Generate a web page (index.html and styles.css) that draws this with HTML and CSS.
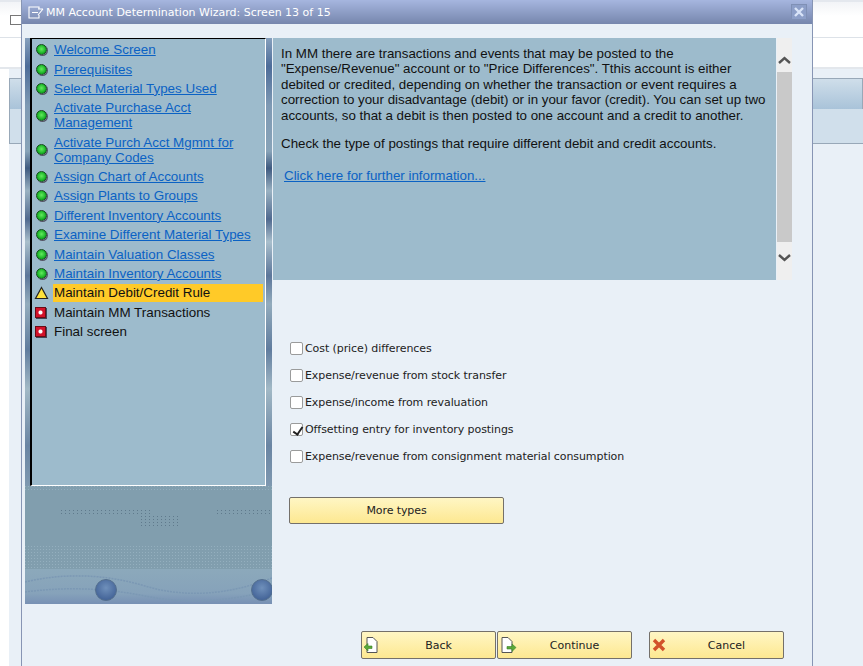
FILE: index.html
```html
<!DOCTYPE html>
<html>
<head>
	<meta charset="utf-8"/>
	<title>MM Account Determination Wizard</title>
	<link rel="stylesheet" href="styles.css">
</head>
<body>
	<!-- SAP window behind the dialog -->
	<div class="shell">
		<div class="shell-bar"><span class="shell-icon"></span></div>
		<div class="shell-bar2"></div>
		<div class="shell-content">
			<div class="shell-head"></div>
			<div class="shell-sub"></div>
		</div>
	</div>

	<div class="dialog">
		<div class="title">
			<svg class="title-icon" width="16" height="13" viewBox="0 0 16 13">
				<path d="M11 3V1H1v11h10V9M4 6.500h6M10 9l5-6M10 3h5" fill="none" stroke="#fff" stroke-width="1.100"/>
			</svg>
			<span class="title-text">MM Account Determination Wizard: Screen 13 of 15</span>
			<span class="close">
				<svg width="10" height="10" viewBox="0 0 10 10"><path d="M1 1l8 8M9 1l-8 8" stroke="#d9e4f8" stroke-width="2.400"/></svg>
			</span>
		</div>

		<div class="main">
			<div class="nav">
				<ul class="steps">
					<li><i class="dot"></i><a href="#">Welcome Screen</a></li>
					<li><i class="dot"></i><a href="#">Prerequisites</a></li>
					<li><i class="dot"></i><a href="#">Select Material Types Used</a></li>
					<li><i class="dot"></i><a href="#">Activate Purchase Acct<br>Management</a></li>
					<li><i class="dot"></i><a href="#">Activate Purch Acct Mgmnt for<br>Company Codes</a></li>
					<li><i class="dot"></i><a href="#">Assign Chart of Accounts</a></li>
					<li><i class="dot"></i><a href="#">Assign Plants to Groups</a></li>
					<li><i class="dot"></i><a href="#">Different Inventory Accounts</a></li>
					<li><i class="dot"></i><a href="#">Examine Different Material Types</a></li>
					<li><i class="dot"></i><a href="#">Maintain Valuation Classes</a></li>
					<li><i class="dot"></i><a href="#">Maintain Inventory Accounts</a></li>
					<li class="current">
						<svg class="tri" width="15" height="14" viewBox="0 0 15 14">
							<path d="M7.500 1.500L13.500 12.500H1.500Z" fill="#ffe23c" stroke="#222" stroke-width="1.200"/>
						</svg>
						<span>Maintain Debit/Credit Rule</span>
					</li>
					<li><i class="stop"></i><span>Maintain MM Transactions</span></li>
					<li><i class="stop"></i><span>Final screen</span></li>
				</ul>
				<svg class="art" width="247" height="118" viewBox="0 0 247 118">
					<defs>
						<pattern id="dots" width="3" height="3" patternUnits="userSpaceOnUse">
							<rect width="1" height="1" fill="#94afbe"/>
						</pattern>
						<pattern id="dark" width="4" height="3" patternUnits="userSpaceOnUse">
							<rect width="1" height="1" fill="#5f7a8c"/>
						</pattern>
						<linearGradient id="floor" x1="0" y1="0" x2="0" y2="1">
							<stop offset="0" stop-color="#8ca9bb"/>
							<stop offset="0.7" stop-color="#86a2ba"/>
							<stop offset="1" stop-color="#7790b4"/>
						</linearGradient>
						<radialGradient id="bubble" cx="0.5" cy="0.4" r="0.7">
							<stop offset="0" stop-color="#6f90bb"/>
							<stop offset="1" stop-color="#3a5a90"/>
						</radialGradient>
					</defs>
					<rect width="247" height="118" fill="#819eae"/>
					<rect width="247" height="6" fill="url(#dots)"/>
					<rect x="33" y="24" width="92" height="5" fill="url(#dark)"/>
					<rect x="114" y="29" width="42" height="12" fill="url(#dark)"/>
					<rect x="189" y="24" width="58" height="5" fill="url(#dark)"/>
					<rect y="59" width="247" height="24" fill="url(#dots)"/>
					<rect y="83" width="247" height="35" fill="url(#floor)"/>
					<path d="M0 96q60-14 120 4t127-8M0 106q60-8 120 4t127-6" fill="none" stroke="#7b98b4" stroke-width="1.500" stroke-dasharray="2 1"/>
					<circle cx="81" cy="104" r="10.500" fill="url(#bubble)" stroke="#55708f"/>
					<circle cx="237" cy="104" r="10.500" fill="url(#bubble)" stroke="#55708f"/>
				</svg>
			</div>

			<div class="content">
				<div class="info">
					<div class="info-text">
						<p>In MM there are transactions and events that may be posted to the<br>
						"Expense/Revenue" account or to "Price Differences". Tthis account is either<br>
						debited or credited, depending on whether the transaction or event requires a<br>
						correction to your disadvantage (debit) or in your favor (credit). You can set up two<br>
						accounts, so that a debit is then posted to one account and a credit to another.</p>
						<p>Check the type of postings that require different debit and credit accounts.</p>
						<p class="more"><a href="#">Click here for further information...</a></p>
					</div>
					<div class="scroll">
						<svg width="15" height="34" viewBox="0 0 15 34"><path d="M2 25l5.500-5 5.500 5" fill="none" stroke="#555" stroke-width="2.400"/></svg>
						<div class="thumb"></div>
						<svg width="15" height="38" viewBox="0 0 15 38"><path d="M2 13l5.500 5 5.500-5" fill="none" stroke="#555" stroke-width="2.400"/></svg>
					</div>
				</div>

				<div class="options">
					<label class="opt"><input type="checkbox">Cost (price) differences</label>
					<label class="opt"><input type="checkbox">Expense/revenue from stock transfer</label>
					<label class="opt"><input type="checkbox">Expense/income from revaluation</label>
					<label class="opt"><input type="checkbox" checked>Offsetting entry for inventory postings</label>
					<label class="opt"><input type="checkbox">Expense/revenue from consignment material consumption</label>
				</div>

				<button class="btn more-btn">More types</button>
			</div>
		</div>

		<div class="footer">
			<button class="btn foot-btn">
				<svg class="btn-icon" width="16" height="18" viewBox="0 0 16 18">
					<path d="M4 1.500h6l4 4v11H4Z" fill="#fff" stroke="#555"/>
					<path d="M1 11l4-3.500V10h4v2.500H5V15Z" fill="#5aa83a" stroke="#3b7f25" stroke-width="0.600"/>
				</svg>Back</button>
			<button class="btn foot-btn">
				<svg class="btn-icon" width="18" height="18" viewBox="0 0 18 18">
					<path d="M3 1.500h6l4 4v11H3Z" fill="#fff" stroke="#555"/>
					<path d="M17 11.500l-4-3.500v2.500H8V13h5v2.500Z" fill="#5aa83a" stroke="#3b7f25" stroke-width="0.600"/>
				</svg>Continue</button>
			<button class="btn foot-btn cancel">
				<svg class="btn-icon" width="14" height="14" viewBox="0 0 14 14">
					<path d="M2 2l10 10M12 2L2 12" stroke="#d2522a" stroke-width="3.400"/>
				</svg>Cancel</button>
		</div>
	</div>
</body>
</html>
```

FILE: styles.css
```css
*{margin: 0;padding: 0;box-sizing: border-box;}
ul{list-style-type: none;}
body{
	width: 863px;
	height: 666px;
	overflow: hidden;
	position: relative;
	background: #fff;
	font-family: "Liberation Sans", Arial, sans-serif;
	font-size: 13.330px;
	color: #111;
}

/* window behind */
.shell-bar{
	height: 38px;
	padding: 13px 0 0 10px;
	border-top: 2px solid #e4e8ee;
	border-bottom: 1px solid #dde2e8;
	background: linear-gradient(#f2f4f7, #fff 40%);
}
.shell-icon{
	display: block;
	width: 14px;
	height: 10px;
	border: 1px solid #777;
}
.shell-bar2{
	height: 31px;
	border-bottom: 2px solid #e3e7ec;
}
.shell-content{
	height: 597px;
	margin-left: 9px;
	padding-top: 9px;
	background: #e9f0f7;
}
.shell-head{
	height: 31px;
	border: 1px solid #98a8b8;
	border-bottom: 0;
	background: linear-gradient(#cfdeea, #a9c3d9);
}
.shell-sub{
	height: 35px;
	background: #d0dfeb;
	border-left: 1px solid #98a8b8;
	border-bottom: 1px solid #98a8b8;
}

/* dialog */
.dialog{
	position: absolute;
	left: 21px;
	top: 0;
	width: 792px;
	height: 666px;
	border: 1px solid #8795b4;
	border-width: 0 1px;
	background: #e9f0f7;
}
.title{
	display: flex;
	align-items: center;
	height: 24px;
	padding-left: 6px;
	background: linear-gradient(#a6b6df, #7686ad);
	color: #fff;
}
.title-icon{
	margin-right: 2px;
}
.title-text{
	flex: 1;
	font-family: "DejaVu Sans", sans-serif;
	font-size: 11px;
}
.close{
	display: flex;
	align-items: center;
	justify-content: center;
	width: 16px;
	height: 16px;
	margin-right: 5px;
	border: 1px solid #7f90b5;
	background: #8d9fc8;
}

.main{
	display: flex;
	height: 580px;
	padding: 14px 0 0 3px;
}

/* left steps */
.nav{
	width: 247px;
	background: linear-gradient(#86a0bd, #4d6c99 5%, #7f9ab4 12%, #88a3b8 20%, #3f5a80 23%, #9ab2c2 27%, #50698f 32%, #a9bfcc 36%, #5c769a 42%, #93acbd 47%, #607c9e 55%, #a2b9c6 62%, #6a85a3 72%, #8fa8ba 85%, #7f9bae);
}
.steps{
	width: 236px;
	height: 448px;
	margin-left: 5px;
	padding-top: 1px;
	border: 1px solid #fff;
	border-top-color: #000;
	border-left: 2px solid #000;
	background: #9dbbcc;
	font-size: 13.400px;
}
.steps li{
	display: flex;
	align-items: center;
	padding: 2.200px 0;
	line-height: 15px;
}
.steps a{
	margin-left: 22px;
	color: #0b62c4;
}
.steps li span{
	flex: 1;
	margin: 0 2px 0 21px;
	padding-left: 1px;
}
.dot{
	position: absolute;
	left: 14px;
	width: 11px;
	height: 11px;
	border-radius: 50%;
	background: radial-gradient(circle at 50% 45%, #62ec5c, #16b024 65%);
	border: 1px solid #164a1c;
	box-shadow: 1px 1px 0 #556;
}
.stop{
	position: absolute;
	left: 13px;
	width: 11px;
	height: 11px;
	background: radial-gradient(circle, #fff 1.500px, #d3122a 2.500px);
	border: 1px solid #6a0c14;
	box-shadow: 1px 1px 0 #445;
}
.tri{
	position: absolute;
	left: 12px;
}
.steps .current{
	padding: 0.700px 0;
}
.current span{
	background: #ffca28;
	line-height: 18px;
}
.art{
	display: block;
}

/* right side */
.content{
	width: 519px;
	margin-left: 1px;
}
.info{
	display: flex;
	height: 242px;
}
.info-text{
	width: 503px;
	padding: 8px 0 0 8px;
	background: #9dbbcc;
	line-height: 15.400px;
}
.info-text p{
	margin-bottom: 12.600px;
}
.info-text .more{
	margin: 17px 0 0 3px;
}
.info-text a{
	color: #0b62c4;
}
.scroll{
	display: flex;
	flex-direction: column;
	width: 15px;
	margin-left: 1px;
	background: #efefef;
}
.thumb{
	height: 170px;
	background: #c9c9c9;
}

.options{
	padding: 55px 0 0 17px;
}
.opt{
	display: flex;
	align-items: center;
	height: 27px;
	font-family: "DejaVu Sans", sans-serif;
	font-size: 11px;
	letter-spacing: -0.080px;
	color: #222;
}
.opt input{
	appearance: none;
	position: relative;
	width: 13px;
	height: 13px;
	margin-right: 2px;
	border: 1px solid #9a9b9b;
	border-radius: 2px;
	background: #fff;
}
.opt input:checked::after{
	content: "";
	position: absolute;
	left: 3.500px;
	top: 0.500px;
	width: 4px;
	height: 8px;
	border: solid #222;
	border-width: 0 2px 2px 0;
	transform: rotate(35deg);
}

.btn{
	position: relative;
	height: 28px;
	border: 1px solid #74706a;
	border-radius: 2px;
	background: linear-gradient(#fff6c4, #fde891);
	font-family: "DejaVu Sans", sans-serif;
	font-size: 11px;
	color: #222;
}
.more-btn{
	display: block;
	width: 215px;
	height: 27px;
	margin: 27px 0 0 16px;
	letter-spacing: -0.100px;
}
.footer{
	display: flex;
	padding: 27px 0 0 339px;
}
.foot-btn{
	width: 135px;
	margin-right: 1px;
	padding-left: 20px;
}
.cancel{
	margin-left: 16px;
}
.btn-icon{
	position: absolute;
	left: 1px;
	top: 4px;
}
.cancel .btn-icon{
	top: 6px;
	left: 2px;
}
```
